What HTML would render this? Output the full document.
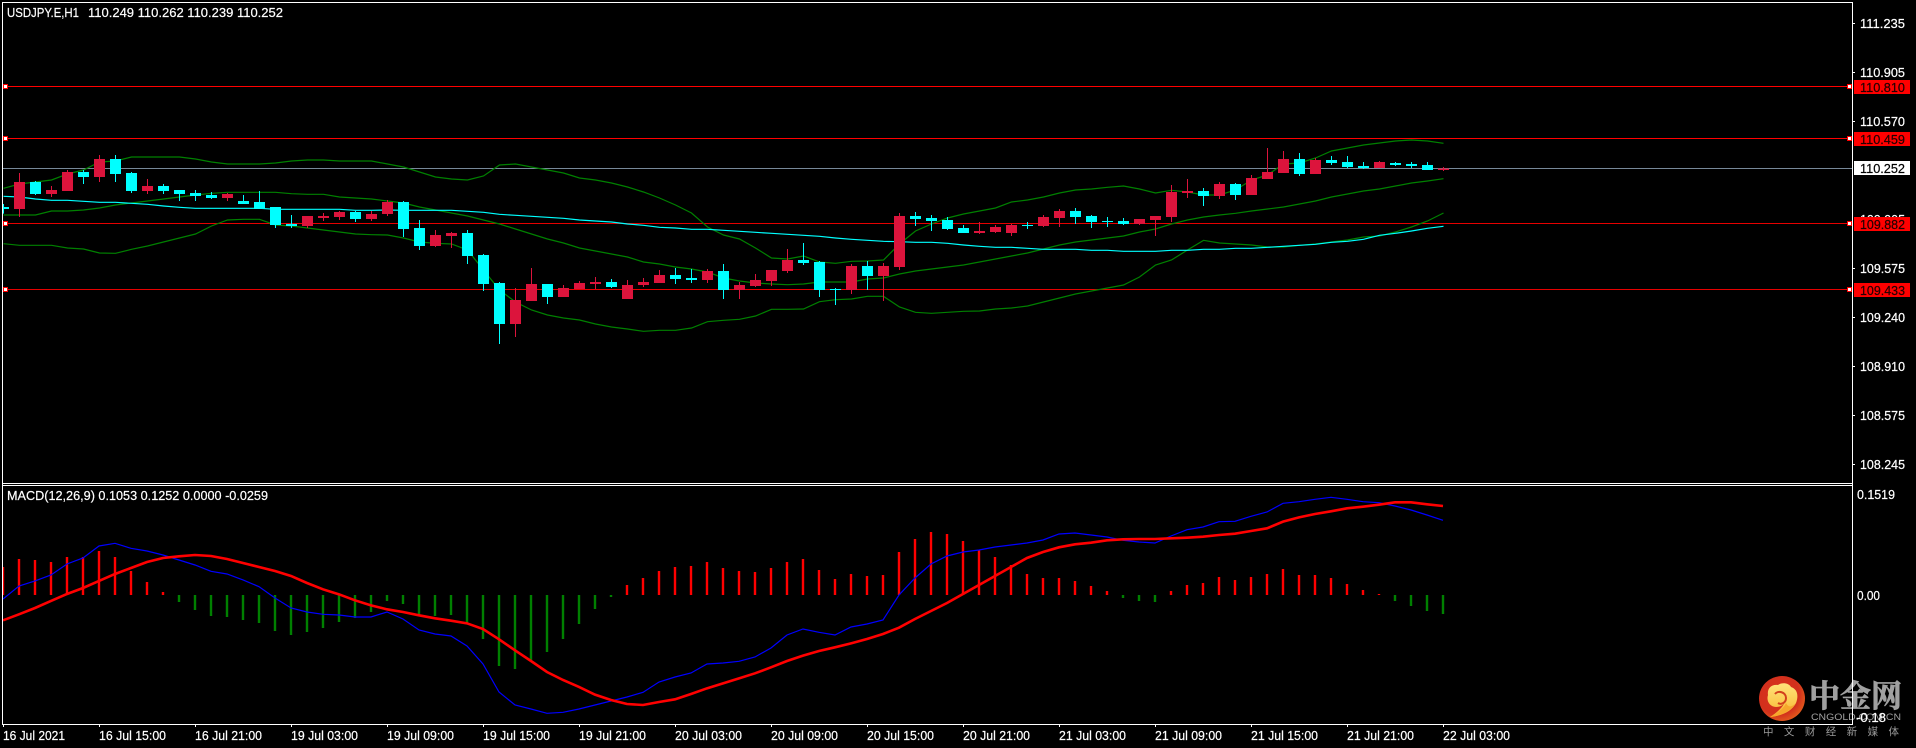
<!DOCTYPE html>
<html>
<head>
<meta charset="utf-8">
<title>USDJPY.E,H1</title>
<style>
html,body{margin:0;padding:0;background:#000;width:1916px;height:748px;overflow:hidden}
svg{display:block;position:absolute;left:0;top:0}
text{font-family:"Liberation Sans","Noto Sans CJK SC",sans-serif;font-size:13px;fill:#fff;stroke:#fff;stroke-width:.2px}
.l{vector-effect:non-scaling-stroke;fill:none}
</style>
</head>
<body>
<svg width="1916" height="748" viewBox="0 0 1916 748" xmlns="http://www.w3.org/2000/svg">
<defs>
<clipPath id="c"><rect x="3" y="3" width="1849" height="722"/></clipPath>
<radialGradient id="lg" cx=".42" cy=".4" r=".65"><stop offset="0" stop-color="#d8311f"/><stop offset=".7" stop-color="#d2301c"/><stop offset="1" stop-color="#e4601c"/></radialGradient>
<linearGradient id="ly" x1="0" y1="0" x2="0" y2="1"><stop offset="0" stop-color="#ffe27a"/><stop offset=".6" stop-color="#fbc94e"/><stop offset="1" stop-color="#f6a72c"/></linearGradient>
</defs>
<rect width="1916" height="748" fill="#000"/>

<g shape-rendering="crispEdges">
<rect x="3" y="86" width="1849" height="1" fill="#ff0000"/>
<rect x="3" y="138" width="1849" height="1" fill="#ff0000"/>
<rect x="3" y="223" width="1849" height="1" fill="#e60000"/>
<rect x="3" y="289" width="1849" height="1" fill="#e60000"/>
<rect x="3" y="168" width="1850" height="1" fill="#778899"/>
</g>

<g clip-path="url(#c)">
<g transform="scale(1,.33333)">
<g stroke="#008000" stroke-width="1.2" class="l">
<polyline class="l" points="3.5,565 19.5,552 35.5,546 51.5,540 67.5,522 83.5,510 99.5,486 115.5,483 131.5,471 147.5,471 163.5,471 179.5,471 195.5,477 211.5,486 227.5,492 243.5,492 259.5,492 275.5,489 291.5,483 307.5,480 323.5,480 339.5,483 355.5,483 371.5,483 387.5,492 403.5,501 419.5,516 435.5,531 451.5,537 467.5,540 483.5,528 499.5,495 515.5,492 531.5,501 547.5,510 563.5,519 579.5,534 595.5,540 611.5,549 627.5,561 643.5,576 659.5,594 675.5,615 691.5,639 707.5,681 723.5,705 739.5,717 755.5,744 771.5,774 787.5,777 803.5,768 819.5,786 835.5,790 851.5,784 867.5,783 883.5,780 899.5,732 915.5,693 931.5,672 947.5,654 963.5,642 979.5,633 995.5,624 1011.5,606 1027.5,600 1043.5,591 1059.5,579 1075.5,570 1091.5,567 1107.5,562 1123.5,558 1139.5,567 1155.5,579 1171.5,571 1187.5,576 1203.5,585 1219.5,585 1235.5,570 1251.5,540 1267.5,525 1283.5,492 1299.5,489 1315.5,474 1331.5,453 1347.5,444 1363.5,435 1379.5,429 1395.5,423 1411.5,420 1427.5,423 1443.5,430"/>
<polyline class="l" points="3.5,645 19.5,645 35.5,645 51.5,633 67.5,633 83.5,630 99.5,624 115.5,615 131.5,609 147.5,603 163.5,597 179.5,591 195.5,585 211.5,580 227.5,577 243.5,577 259.5,577 275.5,577 291.5,581 307.5,583 323.5,583 339.5,591 355.5,594 371.5,597 387.5,603 403.5,609 419.5,621 435.5,630 451.5,639 467.5,648 483.5,660 499.5,672 515.5,687 531.5,702 547.5,717 563.5,729 579.5,744 595.5,753 611.5,762 627.5,771 643.5,786 659.5,792 675.5,801 691.5,807 707.5,816 723.5,834 739.5,843 755.5,849 771.5,852 787.5,854 803.5,852 819.5,846 835.5,846 851.5,846 867.5,837 883.5,834 899.5,822 915.5,813 931.5,807 947.5,801 963.5,795 979.5,786 995.5,777 1011.5,768 1027.5,759 1043.5,747 1059.5,735 1075.5,726 1091.5,720 1107.5,714 1123.5,708 1139.5,696 1155.5,687 1171.5,672 1187.5,660 1203.5,651 1219.5,645 1235.5,640 1251.5,633 1267.5,627 1283.5,621 1299.5,612 1315.5,603 1331.5,591 1347.5,582 1363.5,573 1379.5,567 1395.5,558 1411.5,549 1427.5,543 1443.5,536"/>
<polyline class="l" points="3.5,731 19.5,736 35.5,736 51.5,736 67.5,744 83.5,747 99.5,759 115.5,760 131.5,748 147.5,738 163.5,726 179.5,714 195.5,702 211.5,678 227.5,660 243.5,658 259.5,658 275.5,675 291.5,678 307.5,684 323.5,690 339.5,696 355.5,702 371.5,704 387.5,705 403.5,714 419.5,726 435.5,730 451.5,732 467.5,750 483.5,810 499.5,870 515.5,906 531.5,930 547.5,945 563.5,954 579.5,960 595.5,972 611.5,981 627.5,987 643.5,994 659.5,991 675.5,991 691.5,984 707.5,965 723.5,961 739.5,958 755.5,948 771.5,928 787.5,928 803.5,927 819.5,905 835.5,899 851.5,897 867.5,889 883.5,889 899.5,921 915.5,937 931.5,940 947.5,937 963.5,934 979.5,933 995.5,927 1011.5,924 1027.5,918 1043.5,906 1059.5,894 1075.5,882 1091.5,873 1107.5,864 1123.5,855 1139.5,831 1155.5,795 1171.5,780 1187.5,750 1203.5,721 1219.5,729 1235.5,732 1251.5,735 1267.5,741 1283.5,741 1299.5,736 1315.5,732 1331.5,726 1347.5,720 1363.5,711 1379.5,708 1395.5,696 1411.5,681 1427.5,663 1443.5,639"/>
</g>
<polyline class="l" stroke="#00ffff" stroke-width="1.2" points="3.5,589 19.5,591 35.5,597 51.5,601 67.5,601 83.5,604 99.5,607 115.5,607 131.5,610 147.5,613 163.5,618 179.5,622 195.5,625 211.5,625 227.5,625 243.5,625 259.5,625 275.5,628 291.5,628 307.5,628 323.5,628 339.5,628 355.5,631 371.5,631 387.5,630 403.5,631 419.5,631 435.5,631 451.5,631 467.5,634 483.5,637 499.5,643 515.5,646 531.5,649 547.5,652 563.5,655 579.5,660 595.5,663 611.5,666 627.5,672 643.5,676 659.5,682 675.5,684 691.5,688 707.5,688 723.5,691 739.5,694 755.5,697 771.5,700 787.5,703 803.5,706 819.5,709 835.5,714 851.5,718 867.5,721 883.5,724 899.5,725 915.5,727 931.5,727 947.5,730 963.5,735 979.5,739 995.5,742 1011.5,742 1027.5,745 1043.5,748 1059.5,748 1075.5,748 1091.5,751 1107.5,751 1123.5,754 1139.5,754 1155.5,754 1171.5,751 1187.5,751 1203.5,748 1219.5,748 1235.5,745 1251.5,745 1267.5,742 1283.5,739 1299.5,736 1315.5,733 1331.5,727 1347.5,724 1363.5,718 1379.5,706 1395.5,700 1411.5,693 1427.5,685 1443.5,679"/>

<g shape-rendering="crispEdges" fill="none">
<path stroke="#00ffff" stroke-width="1" d="M3.5 612V641M35.5 543V585M83.5 510V552M115.5 465V546M131.5 516V579M163.5 552V582M179.5 570V603M195.5 570V603M211.5 576V597M243.5 585V612M259.5 573V627M275.5 621V684M291.5 645V684M355.5 633V666M403.5 603V711M419.5 660V750M467.5 690V792M483.5 762V873M499.5 846V1032M547.5 852V912M611.5 837V864M675.5 804V852M691.5 807V849M723.5 792V897M803.5 729V795M819.5 783V891M835.5 864V915M867.5 783V870M915.5 636V678M931.5 645V693M947.5 651V690M963.5 675V699M1027.5 666V687M1075.5 624V672M1091.5 645V684M1107.5 651V681M1123.5 654V675M1203.5 564V618M1235.5 549V600M1299.5 459V528M1331.5 468V495M1347.5 468V504M1363.5 486V507M1395.5 486V498M1411.5 486V504M1427.5 486V510"/>
<path stroke="#00ffff" stroke-width="11" d="M3.5 621V627M35.5 546V582M83.5 516V531M115.5 477V522M131.5 519V573M163.5 558V573M179.5 570V582M195.5 579V588M211.5 585V594M243.5 603V612M259.5 606V627M275.5 621V675M291.5 672V678M355.5 636V657M403.5 606V687M419.5 684V738M467.5 699V768M483.5 765V852M499.5 849V972M547.5 852V891M611.5 846V861M675.5 825V837M691.5 834V840M723.5 813V870M803.5 780V789M819.5 786V870M835.5 867V870M867.5 798V828M915.5 648V657M931.5 654V663M947.5 660V687M963.5 684V699M1027.5 675V678M1075.5 633V651M1091.5 648V666M1107.5 663V666M1123.5 663V672M1203.5 573V588M1235.5 552V585M1299.5 477V522M1331.5 480V489M1347.5 486V501M1363.5 498V504M1395.5 489V495M1411.5 492V498M1427.5 495V510"/>
<path stroke="#dc143c" stroke-width="1" d="M19.5 519V651M51.5 558V591M67.5 510V573M99.5 465V546M147.5 537V582M227.5 579V603M307.5 648V684M323.5 639V663M339.5 633V660M371.5 633V663M387.5 600V648M435.5 690V741M451.5 696V744M515.5 864V1011M531.5 804V903M563.5 855V891M579.5 843V867M595.5 831V867M627.5 840V897M643.5 834V861M659.5 810V849M707.5 807V849M739.5 846V897M755.5 822V861M771.5 810V858M787.5 747V819M851.5 792V882M883.5 789V903M899.5 639V810M979.5 666V702M995.5 675V699M1011.5 672V708M1043.5 645V681M1059.5 627V681M1139.5 657V675M1155.5 648V708M1171.5 555V666M1187.5 537V594M1219.5 546V597M1251.5 525V585M1267.5 444V537M1283.5 453V519M1315.5 474V522M1379.5 483V504M1443.5 501V513"/>
<path stroke="#dc143c" stroke-width="11" d="M19.5 546V627M51.5 570V582M67.5 516V573M99.5 477V531M147.5 558V573M227.5 582V594M307.5 648V678M323.5 648V654M339.5 636V651M371.5 642V657M387.5 606V642M435.5 705V738M451.5 699V708M515.5 900V972M531.5 852V903M563.5 864V891M579.5 849V867M595.5 846V852M627.5 855V897M643.5 846V855M659.5 825V849M707.5 813V840M739.5 855V870M755.5 840V858M771.5 810V843M787.5 780V813M851.5 798V870M883.5 798V828M899.5 648V801M979.5 693V699M995.5 681V696M1011.5 675V699M1043.5 651V678M1059.5 633V654M1139.5 657V672M1155.5 648V660M1171.5 576V651M1187.5 573V579M1219.5 552V588M1251.5 534V585M1267.5 516V537M1283.5 477V519M1315.5 480V522M1379.5 486V504M1443.5 505V510"/>
</g>

<g fill="none" stroke-width="2.4">
<path stroke="#008000" d="M179 375V396M195 375V420M211 375V438M227 375V441M243 375V450M259 375V459M275 375V483M291 375V495M307 375V486M323 375V474M339 375V456M355 375V444M371 375V426M387 375V393M403 375V402M419 375V432M435 375V438M451 375V435M467 375V459M483 375V507M499 375V588M515 375V597M531 375V570M547 375V546M563 375V507M579 375V462M595 375V417M611 375V381M1123 375V384M1139 375V393M1155 375V396M1395 375V393M1411 375V408M1427 375V423M1443 375V432" transform="translate(0,1410)"/>
<path stroke="#ff0000" d="M3 375V291M19 375V267M35 375V270M51 375V276M67 375V261M83 375V261M99 375V243M115 375V261M131 375V303M147 375V336M163 375V366M627 375V345M643 375V324M659 375V303M675 375V291M691 375V288M707 375V276M723 375V294M739 375V303M755 375V306M771 375V294M787 375V276M803 375V267M819 375V300M835 375V327M851 375V312M867 375V318M883 375V315M899 375V246M915 375V207M931 375V186M947 375V192M963 375V213M979 375V240M995 375V261M1011 375V285M1027 375V312M1043 375V324M1059 375V324M1075 375V333M1091 375V348M1107 375V363M1171 375V363M1187 375V345M1203 375V339M1219 375V321M1235 375V330M1251 375V321M1267 375V312M1283 375V297M1299 375V315M1315 375V315M1331 375V324M1347 375V342M1363 375V360M1379 375V372" transform="translate(0,1410)"/>
</g>
<g transform="translate(0,1410)" fill="none">
<polyline class="l" stroke="#0000ff" stroke-width="1.2" points="3,387 19,348 35,333 51,315 67,282 83,264 99,228 115,220 131,235 147,243 163,255 179,270 195,285 211,304 227,312 243,330 259,350 275,384 291,414 307,426 323,433 339,435 355,441 371,441 387,426 403,447 419,480 435,492 451,498 467,528 483,582 499,666 515,705 531,717 547,730 563,727 579,717 595,705 611,693 627,681 643,667 659,636 675,621 691,609 707,582 723,579 739,574 755,561 771,534 787,495 803,477 819,487 835,495 851,471 867,462 883,450 899,375 915,324 931,282 947,258 963,246 979,240 995,231 1011,225 1027,219 1043,210 1059,192 1075,189 1091,195 1107,201 1123,211 1139,216 1155,219 1171,198 1187,179 1203,171 1219,155 1235,154 1251,139 1267,126 1283,100 1299,95 1315,88 1331,82 1347,88 1363,95 1379,98 1395,108 1411,120 1427,135 1443,151"/>
<polyline class="l" stroke="#ff0000" stroke-width="2.6" points="3,451 19,433 35,414 51,393 67,372 83,354 99,333 115,312 131,294 147,276 163,264 179,259 195,255 211,258 227,267 243,279 259,291 275,303 291,318 307,339 323,358 339,373 355,391 371,406 387,418 403,426 419,436 435,445 451,452 467,460 483,477 499,508 515,541 531,573 547,606 563,630 579,651 595,674 611,690 627,702 643,705 659,696 675,688 691,672 707,655 723,640 739,625 755,610 771,592 787,573 803,557 819,543 835,532 851,520 867,507 883,492 899,473 915,447 931,423 947,399 963,372 979,345 995,318 1011,291 1027,264 1043,246 1059,232 1075,223 1091,218 1107,211 1123,208 1139,207 1155,207 1171,205 1187,203 1203,200 1219,195 1235,191 1251,183 1267,175 1283,155 1299,142 1315,132 1331,124 1347,115 1363,110 1379,104 1395,97 1411,97 1427,103 1443,108"/>
</g>
</g>
</g>

<!-- logo -->
<g>
<ellipse cx="1782" cy="698.5" rx="23" ry="22.5" fill="url(#lg)"/>
<path d="M1770 717C1782 716 1792 711 1796 703C1799 695 1797 689 1791 687C1789 683 1782 682 1778 685C1771 684 1767 689 1768 695C1766 701 1770 707 1776 707C1782 707 1786 703 1785 699C1786 703 1781 710 1770 717Z" fill="url(#ly)"/>
<path d="M1770 717C1781 716 1791 711 1796 703C1791 708 1788 707 1786 703C1784 708 1778 713 1770 717Z" fill="#f6a72c"/>
<path d="M1775 694C1778 690 1786 692 1786 698C1786 703 1781 705 1778 703" fill="none" stroke="#d2401c" stroke-width="2"/>
<text x="1809" y="707" textLength="93" lengthAdjust="spacingAndGlyphs" style="font-family:'Liberation Serif','Noto Serif CJK SC',serif;font-size:31px;font-weight:700;fill:#a0a0a0;stroke:#a0a0a0;stroke-width:.7px">中金网</text>
<text x="1811" y="720" textLength="90" lengthAdjust="spacingAndGlyphs" style="font-size:9.5px;fill:#a0a0a0;stroke:none">CNGOLD.COM.CN</text>
<text x="1763" y="735" textLength="136" style="font-family:'Liberation Sans','Noto Sans CJK SC',sans-serif;font-size:10.5px;fill:#9a9a9a;stroke:none">中文财经新媒体</text>
</g>

<!-- frame -->
<g shape-rendering="crispEdges" fill="#fff">
<rect x="2" y="2" width="1851" height="1"/>
<rect x="2" y="2" width="1" height="722"/>
<rect x="1852" y="2" width="1" height="722"/>
<rect x="2" y="483" width="1851" height="1"/>
<rect x="2" y="485" width="1851" height="1"/>
<rect x="2" y="724" width="1851" height="1"/>
<rect x="1853" y="23" width="2" height="1"/>
<rect x="1853" y="72" width="2" height="1"/>
<rect x="1853" y="121" width="2" height="1"/>
<rect x="1853" y="268" width="2" height="1"/>
<rect x="1853" y="317" width="2" height="1"/>
<rect x="1853" y="366" width="2" height="1"/>
<rect x="1853" y="415" width="2" height="1"/>
<rect x="1853" y="464" width="2" height="1"/>
<rect x="3" y="725" width="1" height="2"/>
<rect x="99" y="725" width="1" height="2"/>
<rect x="195" y="725" width="1" height="2"/>
<rect x="291" y="725" width="1" height="2"/>
<rect x="387" y="725" width="1" height="2"/>
<rect x="483" y="725" width="1" height="2"/>
<rect x="579" y="725" width="1" height="2"/>
<rect x="675" y="725" width="1" height="2"/>
<rect x="771" y="725" width="1" height="2"/>
<rect x="867" y="725" width="1" height="2"/>
<rect x="963" y="725" width="1" height="2"/>
<rect x="1059" y="725" width="1" height="2"/>
<rect x="1155" y="725" width="1" height="2"/>
<rect x="1251" y="725" width="1" height="2"/>
<rect x="1347" y="725" width="1" height="2"/>
<rect x="1443" y="725" width="1" height="2"/>
</g>

<!-- hline anchors -->
<g shape-rendering="crispEdges" fill="#fff" stroke="#ff0000" stroke-width="1">
<rect x="3.5" y="84.5" width="4" height="4"/>
<rect x="3.5" y="136.5" width="4" height="4"/>
<rect x="3.5" y="221.5" width="4" height="4"/>
<rect x="3.5" y="287.5" width="4" height="4"/>
<rect x="1847.5" y="84.5" width="4" height="4"/>
<rect x="1847.5" y="136.5" width="4" height="4"/>
<rect x="1847.5" y="221.5" width="4" height="4"/>
<rect x="1847.5" y="287.5" width="4" height="4"/>
</g>

<!-- header text -->
<text x="7" y="17" textLength="72" lengthAdjust="spacingAndGlyphs">USDJPY.E,H1</text>
<text x="88" y="17" textLength="195" lengthAdjust="spacingAndGlyphs">110.249 110.262 110.239 110.252</text>
<text x="7" y="500" textLength="261" lengthAdjust="spacingAndGlyphs">MACD(12,26,9) 0.1053 0.1252 0.0000 -0.0259</text>

<!-- price axis -->
<g>
<text x="1860" y="28" textLength="45" lengthAdjust="spacingAndGlyphs">111.235</text>
<text x="1860" y="77" textLength="45" lengthAdjust="spacingAndGlyphs">110.905</text>
<text x="1860" y="126" textLength="45" lengthAdjust="spacingAndGlyphs">110.570</text>
<text x="1860" y="224" textLength="45" lengthAdjust="spacingAndGlyphs">109.905</text>
<text x="1860" y="273" textLength="45" lengthAdjust="spacingAndGlyphs">109.575</text>
<text x="1860" y="322" textLength="45" lengthAdjust="spacingAndGlyphs">109.240</text>
<text x="1860" y="371" textLength="45" lengthAdjust="spacingAndGlyphs">108.910</text>
<text x="1860" y="420" textLength="45" lengthAdjust="spacingAndGlyphs">108.575</text>
<text x="1860" y="469" textLength="45" lengthAdjust="spacingAndGlyphs">108.245</text>
</g>
<g shape-rendering="crispEdges">
<rect x="1854" y="80" width="56" height="14" fill="#ff0000"/>
<rect x="1854" y="132" width="56" height="14" fill="#ff0000"/>
<rect x="1854" y="161" width="56" height="14" fill="#ffffff"/>
<rect x="1854" y="217" width="56" height="14" fill="#ff0000"/>
<rect x="1854" y="283" width="56" height="14" fill="#ff0000"/>
</g>
<g>
<text x="1860" y="92" textLength="45" lengthAdjust="spacingAndGlyphs" style="fill:#200;stroke:#200">110.810</text>
<text x="1860" y="144" textLength="45" lengthAdjust="spacingAndGlyphs" style="fill:#200;stroke:#200">110.459</text>
<text x="1860" y="173" textLength="45" lengthAdjust="spacingAndGlyphs" style="fill:#000;stroke:#000">110.252</text>
<text x="1860" y="229" textLength="45" lengthAdjust="spacingAndGlyphs" style="fill:#200;stroke:#200">109.882</text>
<text x="1860" y="295" textLength="45" lengthAdjust="spacingAndGlyphs" style="fill:#200;stroke:#200">109.433</text>
</g>
<text x="1857" y="499" textLength="38" lengthAdjust="spacingAndGlyphs">0.1519</text>
<text x="1857" y="600" textLength="23" lengthAdjust="spacingAndGlyphs">0.00</text>
<text x="1856" y="722" textLength="30" lengthAdjust="spacingAndGlyphs">-0.18</text>

<!-- time axis -->
<g>
<text x="3" y="740" textLength="62" lengthAdjust="spacingAndGlyphs">16 Jul 2021</text>
<text x="99" y="740" textLength="67" lengthAdjust="spacingAndGlyphs">16 Jul 15:00</text>
<text x="195" y="740" textLength="67" lengthAdjust="spacingAndGlyphs">16 Jul 21:00</text>
<text x="291" y="740" textLength="67" lengthAdjust="spacingAndGlyphs">19 Jul 03:00</text>
<text x="387" y="740" textLength="67" lengthAdjust="spacingAndGlyphs">19 Jul 09:00</text>
<text x="483" y="740" textLength="67" lengthAdjust="spacingAndGlyphs">19 Jul 15:00</text>
<text x="579" y="740" textLength="67" lengthAdjust="spacingAndGlyphs">19 Jul 21:00</text>
<text x="675" y="740" textLength="67" lengthAdjust="spacingAndGlyphs">20 Jul 03:00</text>
<text x="771" y="740" textLength="67" lengthAdjust="spacingAndGlyphs">20 Jul 09:00</text>
<text x="867" y="740" textLength="67" lengthAdjust="spacingAndGlyphs">20 Jul 15:00</text>
<text x="963" y="740" textLength="67" lengthAdjust="spacingAndGlyphs">20 Jul 21:00</text>
<text x="1059" y="740" textLength="67" lengthAdjust="spacingAndGlyphs">21 Jul 03:00</text>
<text x="1155" y="740" textLength="67" lengthAdjust="spacingAndGlyphs">21 Jul 09:00</text>
<text x="1251" y="740" textLength="67" lengthAdjust="spacingAndGlyphs">21 Jul 15:00</text>
<text x="1347" y="740" textLength="67" lengthAdjust="spacingAndGlyphs">21 Jul 21:00</text>
<text x="1443" y="740" textLength="67" lengthAdjust="spacingAndGlyphs">22 Jul 03:00</text>
</g>
</svg>
</body>
</html>
